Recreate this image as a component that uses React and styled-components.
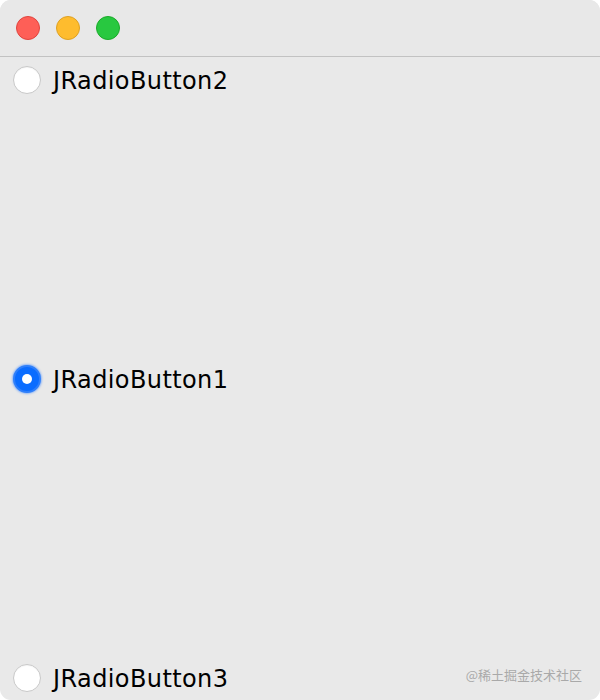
import styled, { createGlobalStyle } from "styled-components";

const GlobalStyle = createGlobalStyle`
  html, body {
    margin: 0;
    padding: 0;
    background: #ffffff;
  }
`;

export default function App() {
  return (
    <>
      <GlobalStyle />
      <StyledWindow>
        <StyledTitleBar>
          <StyledLight $color="#fe5f57" $border="#e0443e" />
          <StyledLight $color="#febc2e" $border="#dea123" />
          <StyledLight $color="#28c840" $border="#1aab29" />
        </StyledTitleBar>
        <StyledContent>
          <Radio label="JRadioButton2" />
          <Radio label="JRadioButton1" checked />
          <Radio label="JRadioButton3" />
          <StyledWatermark>@稀土掘金技术社区</StyledWatermark>
        </StyledContent>
      </StyledWindow>
    </>
  );
}

function Radio({ label, checked }) {
  return (
    <StyledRow>
      <StyledCircle $checked={checked} />
      <StyledLabel>{label}</StyledLabel>
    </StyledRow>
  );
}

const StyledWindow = styled.div`
  width: 600px;
  height: 700px;
  background: #e9e9e9;
  border-radius: 11px;
  overflow: hidden;
  display: flex;
  flex-direction: column;
`;

const StyledTitleBar = styled.div`
  height: 57px;
  flex-shrink: 0;
  display: flex;
  align-items: center;
  gap: 16px;
  padding: 0 0 1px 16px;
  box-sizing: border-box;
  background: #e8e8e8;
  border-bottom: 1px solid #c2c2c2;
`;

const StyledLight = styled.span`
  width: 24px;
  height: 24px;
  border-radius: 50%;
  box-sizing: border-box;
  background: ${({ $color }) => $color};
  border: 1px solid ${({ $border }) => $border};
`;

const StyledContent = styled.div`
  position: relative;
  flex: 1;
  display: flex;
  flex-direction: column;
  justify-content: space-between;
`;

const StyledRow = styled.div`
  height: 45px;
  display: flex;
  align-items: center;
  gap: 12px;
  padding-left: 13px;
`;

const StyledCircle = styled.span`
  width: 28px;
  height: 28px;
  border-radius: 50%;
  box-sizing: border-box;
  position: relative;
  background: ${({ $checked }) => ($checked ? "#0a6cff" : "#ffffff")};
  border: ${({ $checked }) =>
    $checked ? "2px solid #2f7ffa" : "1px solid #c8c8c8"};
  box-shadow: ${({ $checked }) =>
    $checked
      ? "0 0 2px 1px rgba(70, 140, 255, 0.55)"
      : "inset 0 1px 1px rgba(0, 0, 0, 0.04)"};
  ${({ $checked }) =>
    $checked &&
    `
  &::after {
    content: "";
    position: absolute;
    left: 50%;
    top: 50%;
    width: 10px;
    height: 10px;
    margin: -5px 0 0 -5px;
    border-radius: 50%;
    background: #ffffff;
  }
`}
`;

const StyledLabel = styled.span`
  font-family: "DejaVu Sans", "Liberation Sans", sans-serif;
  font-size: 24px;
  color: #000000;
  letter-spacing: 0.4px;
  padding-top: 2px;
`;

const StyledWatermark = styled.span`
  position: absolute;
  right: 18px;
  bottom: 16px;
  font-family: "Noto Sans CJK SC", sans-serif;
  font-size: 13px;
  color: #a9a9a9;
`;
